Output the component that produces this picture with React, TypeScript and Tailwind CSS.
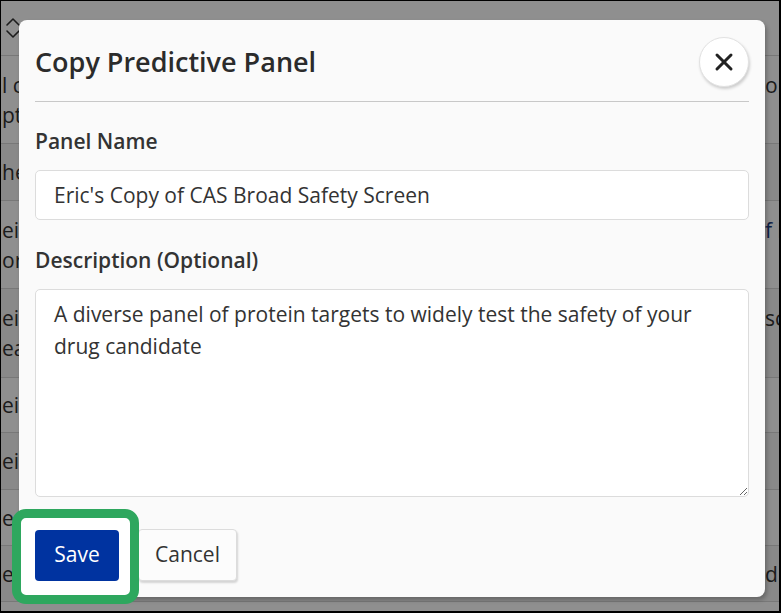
import React from "react";

const rows = [
  { h: "h-[88px]", left: ["l c", "pti"], right: ["or", "\u00a0"], stripe: false },
  { h: "h-[57px]", left: ["he"], right: [""], stripe: true },
  { h: "h-[88px]", left: ["ei", "or"], right: ["f k", "\u00a0"], stripe: false, link: true },
  { h: "h-[89px]", left: ["ei", "ea"], right: ["sc", "\u00a0"], stripe: true },
  { h: "h-[55px]", left: ["ei"], right: [""], stripe: false },
  { h: "h-[57px]", left: ["ei"], right: [""], stripe: true },
  { h: "h-[56px]", left: ["e"], right: [""], stripe: false },
  { h: "h-[56px]", left: ["e"], right: ["d"], stripe: true },
];

export default function App() {
  return (
    <div
      className="relative w-[781px] h-[613px] overflow-hidden border-l border-t border-r-2 border-b-2 border-black bg-white text-[#333]"
      style={{ fontFamily: '"Open Sans", "Noto Sans", sans-serif' }}
    >
      {/* background table */}
      <div className="flex flex-col">
        <div className="h-[55px] border-b border-[#d6d6d6] flex items-center pl-[4px]">
          <svg width="16" height="22" viewBox="0 0 16 22" fill="none" stroke="#333" strokeWidth="1.6" strokeLinecap="round" strokeLinejoin="round">
            <path d="M2 8 L8 2 L14 8" />
            <path d="M2 14 L8 20 L14 14" />
          </svg>
        </div>
        {rows.map((r, i) => (
          <div
            key={i}
            className={`${r.h} border-b border-[#d6d6d6] flex items-center justify-between text-[21px] leading-[30px] ${r.stripe ? "bg-[#f4f4f4]" : "bg-white"}`}
          >
            <div className="w-[18px] overflow-hidden whitespace-nowrap pl-[1px]">
              {r.left.map((t, j) => (
                <div key={j}>{t}</div>
              ))}
            </div>
            <div className={`w-[14px] overflow-hidden whitespace-nowrap ${r.link ? "text-[#1b3a7a]" : ""}`}>
              {r.right.map((t, j) => (
                <div key={j}>{t}</div>
              ))}
            </div>
          </div>
        ))}
      </div>

      {/* overlay */}
      <div className="absolute inset-0 bg-black/[0.44] pl-[18px] pt-[19px]">
        <div className="w-[746px] rounded-[8px] bg-[#fafafa] px-4 pb-4 shadow-[2px_3px_4px_rgba(0,0,0,0.25)]">
          <div className="flex items-center justify-between border-b border-[#c8c8c8] pt-[17px] pb-[14px]">
            <h2 className="text-[27px] font-semibold leading-[36px] text-[#2b2b2b]">Copy Predictive Panel</h2>
            <button className="flex h-[50px] w-[50px] items-center justify-center rounded-full border border-[#e2e2e2] bg-white shadow-[1px_2px_3px_rgba(0,0,0,0.18)]">
              <svg width="20" height="20" viewBox="0 0 20 20" stroke="#222" strokeWidth="3" strokeLinecap="round">
                <path d="M3 3 L17 17" />
                <path d="M17 3 L3 17" />
              </svg>
            </button>
          </div>
          <div className="pt-[25px]">
            <label className="block text-[21px] font-semibold leading-[28px] mb-[15px]">Panel Name</label>
            <input
              readOnly
              defaultValue="Eric's Copy of CAS Broad Safety Screen"
              className="block h-[50px] w-full rounded-[5px] border border-[#dcdcdc] bg-white px-[18px] text-[21px] text-[#333] outline-none"
              style={{ fontFamily: '"Open Sans", "Noto Sans", sans-serif' }}
            />
            <label className="block text-[21px] font-semibold leading-[28px] mt-[26px] mb-[15px]">Description (Optional)</label>
            <textarea
              readOnly
              defaultValue="A diverse panel of protein targets to widely test the safety of your drug candidate"
              className="block h-[208px] w-full rounded-[5px] border border-[#dcdcdc] bg-white px-[18px] pt-[8px] text-[21px] leading-[32px] text-[#333] outline-none"
              style={{ fontFamily: '"Open Sans", "Noto Sans", sans-serif' }}
            />
            <div className="mt-[32px] flex items-center gap-[19px]">
              <div className="relative">
                <div className="absolute -left-[23px] -top-[21px] h-[95px] w-[127px] rounded-[14px] border-[9px] border-[#2ea75e] bg-white" />
                <button className="relative h-[51px] w-[84px] rounded-[4px] bg-[#0033a0] text-[21px] text-white">Save</button>
              </div>
              <button className="h-[52px] w-[99px] rounded-[4px] border border-[#dcdcdc] bg-[#fcfcfc] text-[21px] text-[#333] shadow-[1px_2px_2px_rgba(0,0,0,0.15)]">Cancel</button>
            </div>
          </div>
        </div>
      </div>
    </div>
  );
}
